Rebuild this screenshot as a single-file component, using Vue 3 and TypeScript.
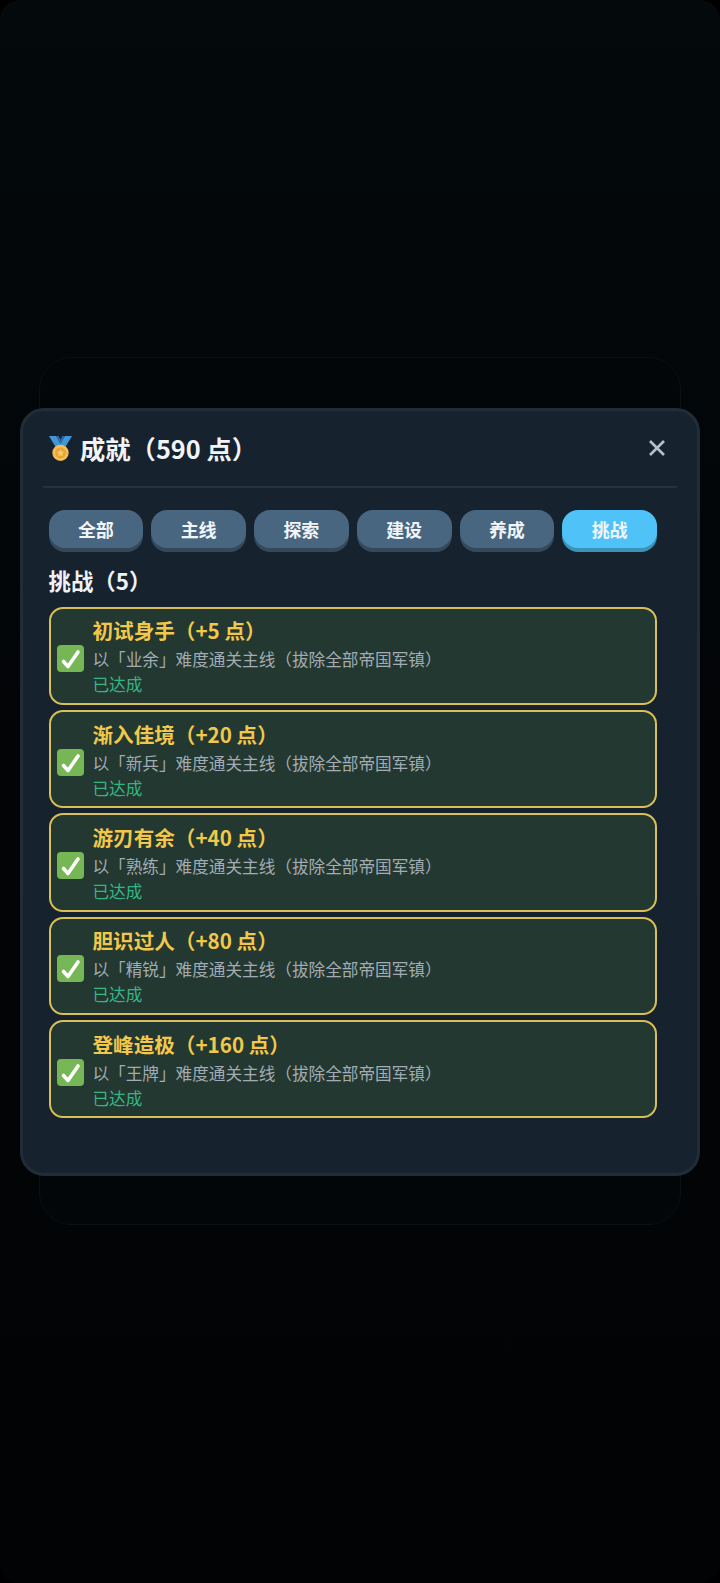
<script setup lang="ts">
const tabs = ['全部', '主线', '探索', '建设', '养成', '挑战']
const activeTab = '挑战'

const items = [
  { name: '初试身手（+5 点）', level: '业余' },
  { name: '渐入佳境（+20 点）', level: '新兵' },
  { name: '游刃有余（+40 点）', level: '熟练' },
  { name: '胆识过人（+80 点）', level: '精锐' },
  { name: '登峰造极（+160 点）', level: '王牌' },
]
</script>

<template>
  <div class="screen">
    <div class="backdrop-panel"></div>
    <div class="modal">
      <div class="modal-head">
        <h2 class="modal-title">
          <svg class="medal" viewBox="0 0 26 26">
            <path d="M1 0h7.500l4.500 8 4.500-8H25l-8.500 14h-7z" fill="#3f96d8" />
            <path d="M8.500 0h2.500l2 4 2-4h2.500l-4.500 8z" fill="#2a6fae" />
            <circle cx="13" cy="17.500" r="8.500" fill="#f4bd55" />
            <circle cx="13" cy="17.500" r="5.600" fill="#e9a23a" />
            <path d="M13 13.600l1.200 2.600 2.800.3-2.100 1.900.6 2.800-2.500-1.400-2.500 1.400.6-2.800-2.100-1.900 2.800-.3z" fill="#f8cf63" />
          </svg>
          <span>成就（590 点）</span>
        </h2>
        <svg class="close" viewBox="0 0 18 18">
          <path d="M2 2l14 14M16 2L2 16" />
        </svg>
      </div>
      <div class="modal-body">
        <div class="tabs">
          <button v-for="tab in tabs" :key="tab" class="tab" :class="{ active: tab === activeTab }">{{ tab }}</button>
        </div>
        <div class="section-title">挑战（5）</div>
        <div class="list">
          <div v-for="item in items" :key="item.name" class="card">
            <svg class="check" viewBox="0 0 27 27">
              <rect width="27" height="27" rx="4" fill="#77b655" />
              <path d="M6.500 16.500L11 21.500 21 7" fill="none" stroke="#fff" stroke-width="3.600" stroke-linecap="round" stroke-linejoin="round" />
            </svg>
            <div class="card-text">
              <div class="card-name">{{ item.name }}</div>
              <div class="card-desc">以「{{ item.level }}」难度通关主线（拔除全部帝国军镇）</div>
              <div class="card-status">已达成</div>
            </div>
          </div>
        </div>
      </div>
    </div>
  </div>
</template>

<style>
html, body { background: #000; }
</style>

<style scoped>
.screen {
  width: 720px;
  height: 1583px;
  display: flex;
  align-items: center;
  justify-content: center;
  position: relative;
  overflow: hidden;
  border-radius: 20px;
  background: linear-gradient(180deg, #04090c 0%, #020406 50%, #010305 100%);
  font-family: "Noto Sans CJK SC", "Noto Sans", sans-serif;
}
.backdrop-panel {
  position: absolute;
  left: 39px;
  top: 357px;
  width: 642px;
  height: 868px;
  box-sizing: border-box;
  border: 1px solid #0a1014;
  border-radius: 32px;
  background: #030609;
}
.modal {
  position: relative;
  width: 680px;
  height: 768px;
  box-sizing: border-box;
  padding: 20px 20px 0;
  border: 3px solid #202d39;
  border-radius: 24px;
  background: #16232f;
}
.modal-head {
  display: flex;
  align-items: flex-start;
  justify-content: space-between;
  height: 57px;
  box-sizing: border-box;
  padding-left: 5px;
  border-bottom: 2px solid #243240;
}
.modal-title {
  display: flex;
  align-items: center;
  gap: 7px;
  margin: 0;
  font-size: 25.3px;
  line-height: 35px;
  font-weight: 700;
  color: #f1f4f7;
}
.medal { width: 25px; height: 25px; }
.close {
  width: 18px;
  height: 18px;
  margin-right: 11px;
  margin-top: 8px;
  fill: none;
  stroke: #b8c0c7;
  stroke-width: 2.6;
}
.modal-body { padding: 22px 20px 0 5.5px; }
.tabs {
  display: grid;
  grid-template-columns: repeat(6, 1fr);
  gap: 8px;
}
.tab {
  height: 38px;
  padding: 0;
  border: 0;
  border-radius: 16px;
  font-family: inherit;
  font-size: 18px;
  font-weight: 700;
  color: #f1f5f9;
  background: #486680;
  box-shadow: 0 4px 0 #34495c;
  margin-bottom: 4px;
}
.tab.active {
  background: #4fc3f7;
  box-shadow: 0 4px 0 #3b93b9;
}
.section-title {
  margin-top: 11px;
  font-size: 22.4px;
  line-height: 34px;
  font-weight: 700;
  color: #eef2f5;
}
.list {
  display: flex;
  flex-direction: column;
  gap: 5px;
  margin-top: 10px;
}
.card {
  display: flex;
  align-items: center;
  gap: 9px;
  height: 98.4px;
  box-sizing: border-box;
  padding: 0 6px;
  border: 2px solid #d8bf58;
  border-radius: 14px;
  background: #233831;
}
.check { width: 27px; height: 27px; flex: none; margin-top: 6px; }
.card-name {
  font-size: 20.6px;
  line-height: 32px;
  font-weight: 700;
  color: #f2c84b;
}
.card-desc {
  font-size: 16.64px;
  line-height: 26px;
  color: #a2acb2;
}
.card-status {
  font-size: 16.64px;
  line-height: 25px;
  color: #35b585;
}
</style>
